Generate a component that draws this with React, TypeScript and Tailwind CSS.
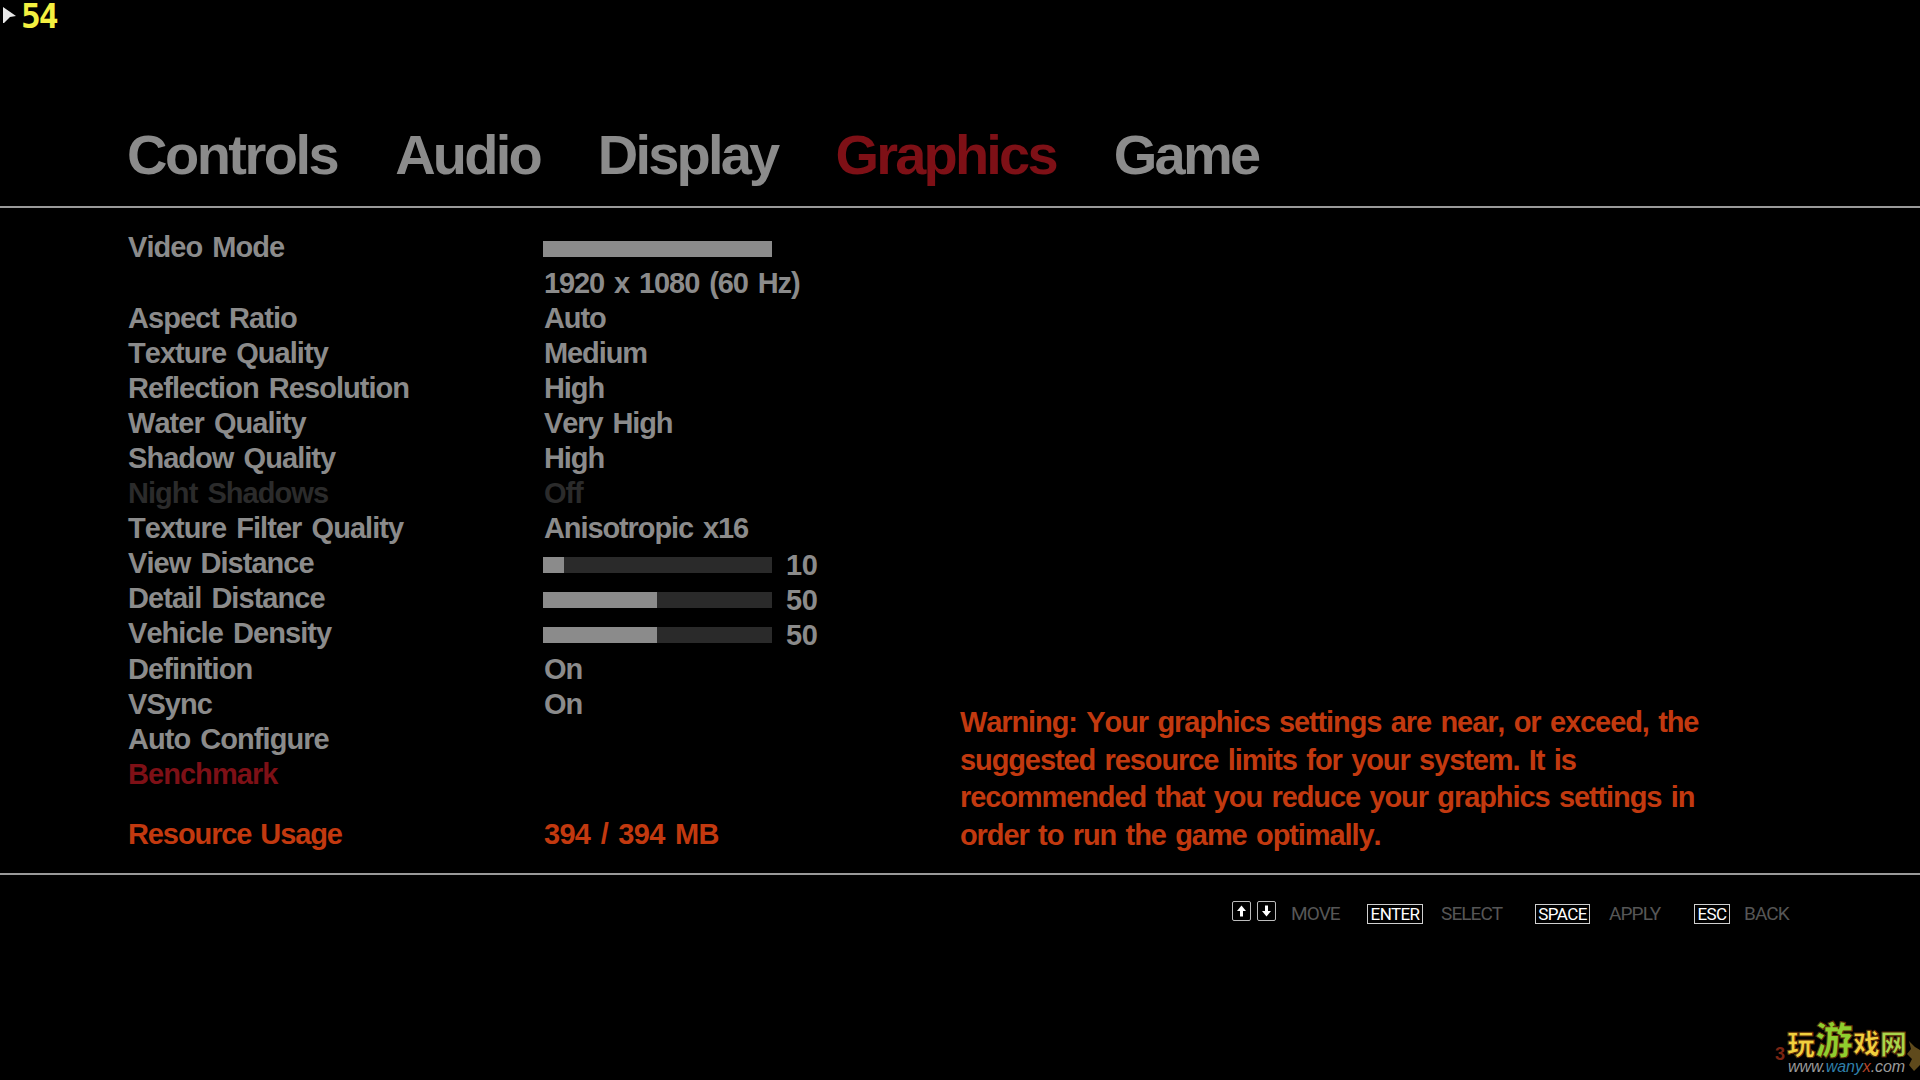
const sans = "font-['Liberation_Sans',Arial,sans-serif]";
const condensed = "font-['Roboto',sans-serif]";

type Row = {
  label: string;
  value?: string;
  bar?: { fill: string; text?: string };
  labelColor?: string;
  valueColor?: string;
};

const tabs = [
  { name: "Controls", color: "text-[#8b8b8b] tracking-[-2.5px]" },
  { name: "Audio", color: "text-[#8b8b8b] tracking-[-2.8px]" },
  { name: "Display", color: "text-[#8b8b8b] tracking-[-2.8px]" },
  { name: "Graphics", color: "text-[#7e1016] tracking-[-2.8px]" },
  { name: "Game", color: "text-[#8b8b8b] tracking-[-2.8px]" },
];

const rows: Row[] = [
  { label: "Video Mode", bar: { fill: "w-full" } },
  { label: "", value: "1920 x 1080 (60 Hz)" },
  { label: "Aspect Ratio", value: "Auto" },
  { label: "Texture Quality", value: "Medium" },
  { label: "Reflection Resolution", value: "High" },
  { label: "Water Quality", value: "Very High" },
  { label: "Shadow Quality", value: "High" },
  { label: "Night Shadows", value: "Off", labelColor: "text-[#2b2b2b]", valueColor: "text-[#2b2b2b]" },
  { label: "Texture Filter Quality", value: "Anisotropic x16" },
  { label: "View Distance", bar: { fill: "w-[21px]", text: "10" } },
  { label: "Detail Distance", bar: { fill: "w-[114px]", text: "50" } },
  { label: "Vehicle Density", bar: { fill: "w-[114px]", text: "50" } },
  { label: "Definition", value: "On" },
  { label: "VSync", value: "On" },
  { label: "Auto Configure" },
  { label: "Benchmark", labelColor: "text-[#7e1016]" },
];

const Arrow = ({ down }: { down?: boolean }) => (
  <span className="flex h-[20px] w-[19px] items-center justify-center rounded-[2px] border border-[#bdbdbd]">
    <svg width="11" height="12" viewBox="0 0 11 12" className={down ? "rotate-180" : ""}>
      <path d="M5.5 0.5 L10 6 L7 6 L7 11.5 L4 11.5 L4 6 L1 6 Z" fill="#ffffff" />
    </svg>
  </span>
);

const Key = ({ children, w }: { children: string; w: string }) => (
  <span className={`flex h-[20px] items-center justify-center border border-[#d0d0d0] ${condensed} text-[17px] leading-none tracking-[-0.6px] text-white ${w}`}>
    {children}
  </span>
);

const Hint = ({ children, cls }: { children: string; cls: string }) => (
  <span className={`whitespace-nowrap ${condensed} text-[19px] leading-none tracking-[-0.9px] text-[#565656] ${cls}`}>{children}</span>
);

const Logo = () => (
  <div className="absolute bottom-[3px] right-0 h-[62px] w-[145px]">
    <div className="absolute left-[12px] top-0 flex h-[43px] items-end font-['Noto_Sans_CJK_SC',sans-serif] font-black leading-[30px] [-webkit-text-stroke:1px_#5a2c08]">
      <span className="text-[28px] text-[#f1cf3d]">玩</span>
      <span className="text-[38px] leading-[40px] text-[#8fce2e]">游</span>
      <span className="text-[27px] text-[#f1cf3d]">戏</span>
      <span className="text-[27px] text-[#a9d64a]">网</span>
    </div>
    <span className={`absolute bottom-[14px] left-0 ${sans} text-[18px] font-bold leading-none text-[#7a2412]`}>3</span>
    <svg width="14" height="30" viewBox="0 0 14 30" className="absolute bottom-[6px] right-0">
      <path d="M3 0 L9 6 L14 9 L14 24 L8 30 L3 24 L6 18 L1 13 L5 8 Z" fill="#5f4a1c" />
    </svg>
    <div className={`absolute bottom-[2px] left-[13px] ${sans} text-[16px] italic leading-none tracking-[-0.1px] text-[#9a9a9a]`}>
      www.<span className="text-[#2f7fa8]">wany</span>
      <span className="text-[#b5452a]">x</span>.com
    </div>
  </div>
);

export default function App() {
  return (
    <div className={`relative flex h-[1080px] w-[1920px] flex-col overflow-hidden bg-black ${sans}`}>
      {/* fps counter */}
      <div className="absolute left-[3px] top-0 flex items-start">
        <svg width="14" height="16" viewBox="0 0 14 16" className="mt-[7px]">
          <path d="M0 0 L13 9 L7 10 L1 16 L0 16 Z" fill="#e8e8e8" />
        </svg>
        <span className="ml-[4px] font-['DejaVu_Sans_Mono',monospace] text-[33px] font-bold leading-[33px] tracking-[-2px] text-[#f4f040]">
          54
        </span>
      </div>

      <div className="flex h-[206px] shrink-0 items-end gap-[58px] pb-[23px] pl-[127px]">
        {tabs.map((t) => (
          <span key={t.name} className={`text-[56px] font-bold leading-[56px] ${t.color}`}>
            {t.name}
          </span>
        ))}
      </div>
      <div className="h-[2px] shrink-0 bg-[#9a9a9a]" />

      <div className="flex h-[665px] shrink-0 items-end pb-[21px] pl-[128px]">
        <div className="w-[832px] shrink-0">
          {rows.map((r, i) => (
            <div key={i} className="flex h-[35.1px] items-center text-[29px] font-bold leading-none tracking-[-1.1px] text-[#8b8b8b] [font-kerning:none] [word-spacing:3px]">
              <span className={`w-[415px] shrink-0 tracking-[-0.95px] ${r.labelColor ?? ""}`}>{r.label}</span>
              {r.value && <span className={`ml-[1px] ${r.valueColor ?? ""}`}>{r.value}</span>}
              {r.bar && (
                <div className="flex items-center pt-[3px]">
                  <div className="h-[16px] w-[229px] bg-[#2a2a2a]">
                    <div className={`h-full bg-[#8b8b8b] ${r.bar.fill}`} />
                  </div>
                  {r.bar.text && <span className="ml-[14px] tracking-[-0.4px]">{r.bar.text}</span>}
                </div>
              )}
            </div>
          ))}
          <div className="mt-[25px] flex h-[35.1px] items-center text-[29px] font-bold leading-none tracking-[-1.1px] text-[#c2390f] [font-kerning:none] [word-spacing:2px]">
            <span className="w-[415px] shrink-0">Resource Usage</span>
            <span className="ml-[1px] tracking-[-0.7px] [word-spacing:3px]">394 / 394 MB</span>
          </div>
        </div>
        <p className="-mb-[2px] w-[790px] text-[29px] font-bold leading-[37.4px] tracking-[-1.1px] text-[#c2390f] [font-kerning:none] [word-spacing:2.5px]">
          Warning: Your graphics settings are near, or exceed, the suggested resource limits for your system. It is
          recommended that you reduce your graphics settings in order to run the game optimally.
        </p>
      </div>
      <div className="h-[2px] shrink-0 bg-[#9a9a9a]" />

      <div className="flex items-start pl-[1232px] pt-[26px]">
        <div className="flex gap-[6px]">
          <Arrow />
          <Arrow down />
        </div>
        <div className="mt-[2px] flex items-center">
          <Hint cls="ml-[15px] w-[46px]">MOVE</Hint>
          <span className="ml-[30px] mt-[1px]"><Key w="w-[56px]">ENTER</Key></span>
          <Hint cls="ml-[18px] w-[64px]">SELECT</Hint>
          <span className="ml-[30px] mt-[1px]"><Key w="w-[55px]">SPACE</Key></span>
          <Hint cls="ml-[19px] w-[56px]">APPLY</Hint>
          <span className="ml-[29px] mt-[1px]"><Key w="w-[36px]">ESC</Key></span>
          <Hint cls="ml-[14px] w-[47px]">BACK</Hint>
        </div>
      </div>

      <Logo />
    </div>
  );
}
